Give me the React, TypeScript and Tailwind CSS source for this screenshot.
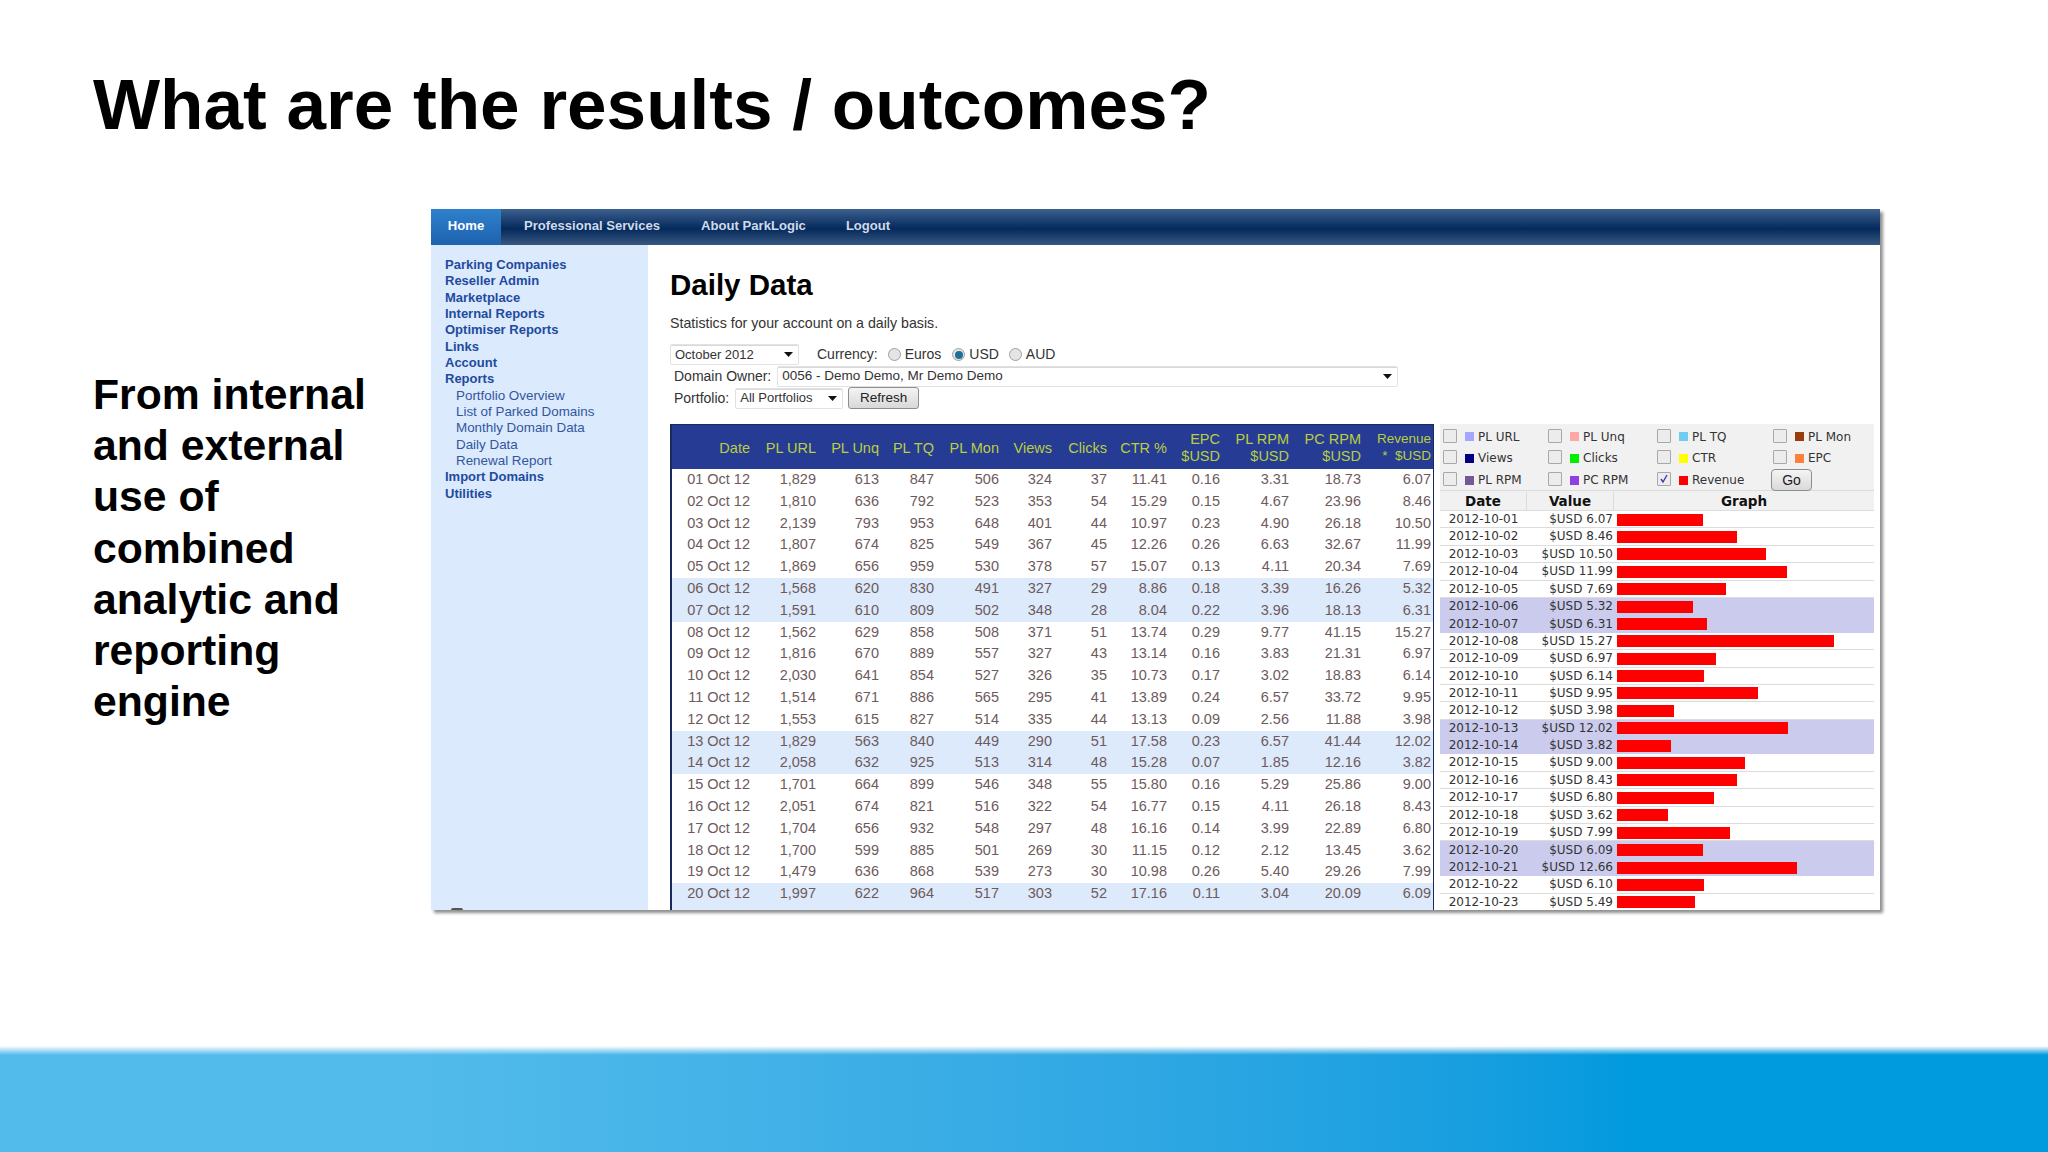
const rows: string[][] = [
["01 Oct 12","1,829","613","847","506","324","37","11.41","0.16","3.31","18.73","6.07"],
["02 Oct 12","1,810","636","792","523","353","54","15.29","0.15","4.67","23.96","8.46"],
["03 Oct 12","2,139","793","953","648","401","44","10.97","0.23","4.90","26.18","10.50"],
["04 Oct 12","1,807","674","825","549","367","45","12.26","0.26","6.63","32.67","11.99"],
["05 Oct 12","1,869","656","959","530","378","57","15.07","0.13","4.11","20.34","7.69"],
["06 Oct 12","1,568","620","830","491","327","29","8.86","0.18","3.39","16.26","5.32"],
["07 Oct 12","1,591","610","809","502","348","28","8.04","0.22","3.96","18.13","6.31"],
["08 Oct 12","1,562","629","858","508","371","51","13.74","0.29","9.77","41.15","15.27"],
["09 Oct 12","1,816","670","889","557","327","43","13.14","0.16","3.83","21.31","6.97"],
["10 Oct 12","2,030","641","854","527","326","35","10.73","0.17","3.02","18.83","6.14"],
["11 Oct 12","1,514","671","886","565","295","41","13.89","0.24","6.57","33.72","9.95"],
["12 Oct 12","1,553","615","827","514","335","44","13.13","0.09","2.56","11.88","3.98"],
["13 Oct 12","1,829","563","840","449","290","51","17.58","0.23","6.57","41.44","12.02"],
["14 Oct 12","2,058","632","925","513","314","48","15.28","0.07","1.85","12.16","3.82"],
["15 Oct 12","1,701","664","899","546","348","55","15.80","0.16","5.29","25.86","9.00"],
["16 Oct 12","2,051","674","821","516","322","54","16.77","0.15","4.11","26.18","8.43"],
["17 Oct 12","1,704","656","932","548","297","48","16.16","0.14","3.99","22.89","6.80"],
["18 Oct 12","1,700","599","885","501","269","30","11.15","0.12","2.12","13.45","3.62"],
["19 Oct 12","1,479","636","868","539","273","30","10.98","0.26","5.40","29.26","7.99"],
["20 Oct 12","1,997","622","964","517","303","52","17.16","0.11","3.04","20.09","6.09"],
["21 Oct 12","2,022","673","896","474","318","58","18.24","0.20","3.66","20.07","12.66"],
];
const heads: string[][] = [["Date"],["PL URL"],["PL Unq"],["PL TQ"],["PL Mon"],["Views"],["Clicks"],["CTR %"],["EPC","$USD"],["PL RPM","$USD"],["PC RPM","$USD"]];
const revenue = ["6.07","8.46","10.50","11.99","7.69","5.32","6.31","15.27","6.97","6.14","9.95","3.98","12.02","3.82","9.00","8.43","6.80","3.62","7.99","6.09","12.66","6.10","5.49"];
const hiDay = (i: number) => (i + 1) % 7 === 6 || (i + 1) % 7 === 0;
const cols = "grid grid-cols-[78px_66px_63px_55px_65px_53px_55px_60px_53px_69px_72px_70px]";
const legend: [string, string, boolean][] = [
  ["PL URL","bg-[#a6a6ff]",false],["PL Unq","bg-[#ffa6a6]",false],["PL TQ","bg-[#6fcdf2]",false],["PL Mon","bg-[#983c0c]",false],
  ["Views","bg-[#000080]",false],["Clicks","bg-[#00f000]",false],["CTR","bg-[#ffff00]",false],["EPC","bg-[#ff8038]",false],
  ["PL RPM","bg-[#735a96]",false],["PC RPM","bg-[#9040e0]",false],["Revenue","bg-[#ff0000]",true],
];
const side: [string, boolean][] = [["Parking Companies",false],["Reseller Admin",false],["Marketplace",false],["Internal Reports",false],["Optimiser Reports",false],["Links",false],["Account",false],["Reports",false],["Portfolio Overview",true],["List of Parked Domains",true],["Monthly Domain Data",true],["Daily Data",true],["Renewal Report",true],["Import Domains",false],["Utilities",false]];

function Caret() {
  return <svg width="9" height="5" viewBox="0 0 9 5" className="shrink-0"><path d="M0 0h9L4.500 5z" fill="#111" /></svg>;
}
function Select({ text, cls }: { text: string; cls: string }) {
  return (
    <div className={`flex h-[21px] items-center justify-between rounded-[2px] border border-[#e2e2e2] bg-white pl-[4px] pr-[5px] shadow-[inset_0_1px_0_#d8d8d8] ${cls}`}>
      <span>{text}</span>
      <Caret />
    </div>
  );
}
function Radio({ on }: { on?: boolean }) {
  return (
    <span className="flex h-[13px] w-[13px] items-center justify-center rounded-full border border-[#a0a0a0] bg-[#e4e4e4]">
      {on && <span className="h-[8px] w-[8px] rounded-full bg-[#1f6f98]" />}
    </span>
  );
}

export default function App() {
  return (
    <div className="relative flex h-[1152px] w-[2048px] flex-col overflow-hidden bg-white font-['Liberation_Sans',Arial,sans-serif] text-black">
      <header className="h-[209px] shrink-0 pl-[93px] pt-[63px]">
        <h1 className="text-[71.100px] font-bold leading-[84px]">What are the results / outcomes?</h1>
      </header>
      <div className="flex h-[701px] shrink-0">
        <p className="w-[431px] shrink-0 pl-[93px] pt-[160px] text-[42.700px] font-bold leading-[51.200px]">
          From internal<br />and external<br />use of<br />combined<br />analytic and<br />reporting<br />engine
        </p>
        <div className="flex h-[701px] w-[1449px] shrink-0 flex-col overflow-hidden bg-white shadow-[3px_3px_3px_#8f8f8f]">
          <nav className="flex h-[36px] shrink-0 items-stretch bg-gradient-to-b from-[#3c618f] via-[#04295c] via-55% to-[#37587f] pb-[2px] text-[13.100px] font-bold text-[#cfdbe8]">
            <div className="-mb-[2px] flex w-[70px] items-center justify-center bg-gradient-to-b from-[#2f80cc] to-[#1d63ae] pb-[2px] text-white">Home</div>
            <div className="ml-[23px] flex items-center">Professional Services</div>
            <div className="ml-[41px] flex items-center">About ParkLogic</div>
            <div className="ml-[40px] flex items-center">Logout</div>
          </nav>
          <div className="flex min-h-0 flex-1">
            <aside className="relative w-[217px] shrink-0 bg-[#dbeafc] pl-[14px] pt-[12px] leading-[16.330px]">
              {side.map(([t, sub]) => (
                <div key={t} className={sub ? "pl-[11px] text-[13.400px] text-[#33569f]" : "text-[13px] font-bold text-[#1f4aa0]"}>{t}</div>
              ))}
              <span className="absolute bottom-0 left-[20px] h-[2px] w-[12px] rounded-t-full bg-[#555]" />
            </aside>
            <main className="min-w-0 flex-1 pl-[22px] pr-[6px]">
              <h2 className="pt-[21px] text-[29.500px] font-bold leading-[38px]">Daily Data</h2>
              <p className="mt-[10px] text-[14.200px] leading-[18px] text-[#333]">Statistics for your account on a daily basis.</p>
              <div className="mt-[12px] flex h-[21px] items-center text-[14px] text-[#333]">
                <Select text="October 2012" cls="w-[129px] text-[13px]" />
                <span className="ml-[18px]">Currency:</span>
                <span className="ml-[10px] flex items-center gap-[4px]"><Radio />Euros</span>
                <span className="ml-[11px] flex items-center gap-[4px]"><Radio on />USD</span>
                <span className="ml-[10px] flex items-center gap-[4px]"><Radio />AUD</span>
              </div>
              <div className="mt-[1px] flex h-[21px] items-center pl-[4px] text-[14px] text-[#333]">
                <span>Domain Owner:</span>
                <Select text="0056 - Demo Demo, Mr Demo Demo" cls="ml-[6px] w-[621px] text-[13.500px]" />
              </div>
              <div className="flex h-[22px] items-center pl-[4px] text-[14px] text-[#333]">
                <span>Portfolio:</span>
                <Select text="All Portfolios" cls="ml-[6px] w-[108px] text-[13px]" />
                <button className="ml-[5px] h-[22px] w-[71px] rounded-[3px] border border-[#8e8e8e] bg-gradient-to-b from-[#f4f4f4] to-[#d8d8d8] text-[13.500px] text-[#222]">Refresh</button>
              </div>
              <div className="mt-[15px] flex gap-[6px]">
                <div className="w-[764px] shrink-0 border-x border-l-2 border-[#1a2a5e] text-[14.500px] leading-[21.800px] text-[#6e5a5c]">
                  <div className={`${cols} h-[45px] items-center border-t border-[#1a2a5e] bg-[#263b93] pt-[2px] leading-[17px] text-[#b9cf3e]`}>
                    {heads.map((h, i) => (
                      <div key={i} className="text-right">
                        {h.map((l) => <div key={l} className="whitespace-nowrap">{l}</div>)}
                      </div>
                    ))}
                    <div className="-mt-[3px] text-right text-[13.500px]">
                      <div className="whitespace-nowrap">Revenue</div>
                      <div className="whitespace-pre">*  $USD</div>
                    </div>
                  </div>
                  {rows.map((r, i) => (
                    <div key={i} className={`${cols} h-[21.800px] ${hiDay(i) ? "bg-[#dceafb]" : "bg-white"}`}>
                      {r.map((c, j) => <div key={j} className="text-right whitespace-nowrap">{c}</div>)}
                    </div>
                  ))}
                </div>
                <div className="w-[434px] shrink-0 font-['DejaVu_Sans',Verdana,sans-serif] text-[12px] text-[#333]">
                  <div className="grid h-[66px] grid-cols-[105px_109px_116px_104px] grid-rows-[21px_22px_22px] bg-[#f1f1f1] pl-[3px] pt-[2px]">
                    {legend.map(([t, c, on]) => (
                      <div key={t} className="flex items-center">
                        <span className="-mt-[2px] flex h-[14px] w-[14px] items-center justify-center rounded-[1px] border border-[#a8a8a8] bg-[#ececec]">
                          {on && <svg width="10" height="10" viewBox="0 0 10 10"><path d="M2 5l2 3 4-7" fill="none" stroke="#3a3ab0" strokeWidth="1.400" /></svg>}
                        </span>
                        <span className={`ml-[8px] h-[9px] w-[9px] ${c}`} />
                        <span className="ml-[4px]">{t}</span>
                      </div>
                    ))}
                    <div className="flex items-center">
                      <button className="-ml-[2px] h-[22px] w-[41px] rounded-[4px] border border-[#8e8e8e] bg-gradient-to-b from-[#f4f4f4] to-[#dadada] font-['Liberation_Sans',Arial,sans-serif] text-[14px] text-[#222]">Go</button>
                    </div>
                  </div>
                  <div className="grid h-[21px] grid-cols-[87px_87px_260px] items-center border-y border-[#dcdcdc] bg-[#f1f1f1] text-center text-[13.500px] font-bold leading-[18px] text-[#111]">
                    <div className="border-r border-[#dcdcdc]">Date</div><div className="border-r border-[#dcdcdc]">Value</div><div>Graph</div>
                  </div>
                  {revenue.map((v, i) => (
                    <div key={i} className={`grid h-[17.400px] grid-cols-[87px_87px_260px] items-center leading-[17px] ${hiDay(i) ? "bg-[#cbcbee]" : "border-b border-[#dcdcdc] bg-white"}`}>
                      <div className="text-center">2012-10-{String(i + 1).padStart(2, "0")}</div>
                      <div className="pr-[1px] text-right whitespace-nowrap">$USD {v}</div>
                      <div className="pl-[3px]"><div className="h-[12px] bg-[#ff0000]" style={{ width: `${parseFloat(v) * 14.2}px` }} /></div>
                    </div>
                  ))}
                </div>
              </div>
            </main>
          </div>
        </div>
      </div>
      <div className="mt-auto h-[106px] shrink-0 bg-gradient-to-r from-[#52bbeb] from-20% to-[#009ade] to-80%">
        <div className="h-[9px] bg-gradient-to-b from-white to-transparent" />
      </div>
    </div>
  );
}
